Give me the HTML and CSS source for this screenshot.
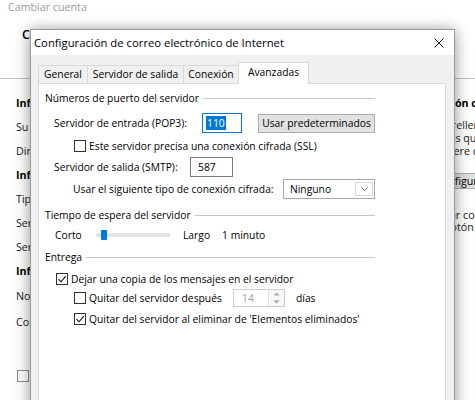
FILE: index.html
```html
<!DOCTYPE html>
<html lang="es">
    <head>
        <meta charset="UTF-8">
        <meta name="viewport" content="width=device-width, initial-scale=1.0">
        <title>Cambiar cuenta</title>
        <link rel="stylesheet" href="styles.css">
    </head>
    <body>
        <div class="screen">
            <!-- Account window underneath -->
            <div class="account">
                <div class="account-title">Cambiar cuenta</div>
                <div class="account-head">Configuración de cuenta POP e IMAP</div>
                <div class="account-body">
                    <div class="account-fields">
                        <div class="field field-head">Información sobre el usuario</div>
                        <div class="field">Su nombre:</div>
                        <div class="field">Dirección de correo electrónico:</div>
                        <div class="field field-head">Información del servidor</div>
                        <div class="field">Tipo de cuenta:</div>
                        <div class="field">Servidor de correo entrante:</div>
                        <div class="field">Servidor de correo saliente (SMTP):</div>
                        <div class="field field-head">Información de inicio de sesión</div>
                        <div class="field field-tall">Nombre de usuario:</div>
                        <div class="field field-tall">Contraseña:</div>
                        <div class="remember"><span class="remember-box"></span>Recordar contraseña</div>
                    </div>
                    <div class="account-test">
                        <div class="test-head">Información complementaria</div>
                        <p class="test-text">Para ello, rellene la información de esta pantalla.<br>Le pedimos que compruebe la cuenta<br>si se requiere conexión de red.</p>
                        <div class="test-button">Configurar cuenta...</div>
                        <p class="test-text test-note">Comprobar configuración de la cuenta.<br>Pulse el botón Siguiente para continuar.</p>
                    </div>
                </div>
            </div>

            <!-- Internet mail settings dialog -->
            <div class="dialog">
                <div class="dialog-title">
                    <span>Configuración de correo electrónico de Internet</span>
                    <svg class="dialog-close" width="10" height="10" viewBox="0 0 10 10">
                        <path d="M0.5 0.5 L9.5 9.5 M9.5 0.5 L0.5 9.5" stroke="#111" stroke-width="1" fill="none"/>
                    </svg>
                </div>
                <div class="dialog-body">
                    <div class="tabs">
                        <div class="tab tab-general">General</div>
                        <div class="tab tab-outgoing">Servidor de salida</div>
                        <div class="tab tab-connection">Conexión</div>
                        <div class="tab tab-advanced is-active">Avanzadas</div>
                    </div>
                    <div class="panel">
                        <div class="group-head">Números de puerto del servidor</div>

                        <div class="row row-pop3">
                            <span class="label label-pop3">Servidor de entrada (POP3):</span>
                            <span class="textbox textbox-focus textbox-pop3"><span class="selection">110</span></span>
                            <span class="btn">Usar predeterminados</span>
                        </div>

                        <div class="row row-ssl">
                            <span class="check"></span>
                            <span>Este servidor precisa una conexión cifrada (SSL)</span>
                        </div>

                        <div class="row row-smtp">
                            <span class="label label-smtp">Servidor de salida (SMTP):</span>
                            <span class="textbox textbox-smtp">587</span>
                        </div>

                        <div class="row row-enc">
                            <span class="label label-enc">Usar el siguiente tipo de conexión cifrada:</span>
                            <span class="select">
                                <span>Ninguno</span>
                                <span class="select-arrow">
                                    <svg width="7" height="4" viewBox="0 0 7 4"><path d="M0.5 0.5 L3.5 3.5 L6.5 0.5" stroke="#6d6d6d" fill="none"/></svg>
                                </span>
                            </span>
                        </div>

                        <div class="group-head head-timeout">Tiempo de espera del servidor</div>

                        <div class="row row-slider">
                            <span class="label label-short">Corto</span>
                            <span class="slider"><span class="slider-thumb"></span></span>
                            <span class="slider-long">Largo</span>
                            <span class="slider-value">1 minuto</span>
                        </div>

                        <div class="group-head head-delivery">Entrega</div>

                        <div class="row row-keep">
                            <span class="check is-on">
                                <svg width="10" height="10" viewBox="0 0 10 10"><path d="M1.5 5.2 L4 7.8 L8.8 2.2" stroke="#111" stroke-width="1.1" fill="none"/></svg>
                            </span>
                            <span>Dejar una copia de los mensajes en el servidor</span>
                        </div>

                        <div class="row row-after">
                            <span class="check"></span>
                            <span class="label label-after">Quitar del servidor después</span>
                            <span class="spin">
                                <span class="spin-value">14</span>
                                <span class="spin-buttons">
                                    <svg width="7" height="4" viewBox="0 0 7 4"><path d="M0.5 3.5 L3.5 0.5 L6.5 3.5 Z" fill="#a6a6a6"/></svg>
                                    <svg width="7" height="4" viewBox="0 0 7 4"><path d="M0.5 0.5 L3.5 3.5 L6.5 0.5 Z" fill="#a6a6a6"/></svg>
                                </span>
                            </span>
                            <span class="spin-unit">días</span>
                        </div>

                        <div class="row row-deleted">
                            <span class="check is-on">
                                <svg width="10" height="10" viewBox="0 0 10 10"><path d="M1.5 5.2 L4 7.8 L8.8 2.2" stroke="#111" stroke-width="1.1" fill="none"/></svg>
                            </span>
                            <span>Quitar del servidor al eliminar de 'Elementos eliminados'</span>
                        </div>
                    </div>
                </div>
            </div>
        </div>
    </body>
</html>
```

FILE: styles.css
```css
body {
    margin: 0;
    font-family: 'Open Sans', 'Noto Sans', sans-serif;
    font-size: 10.3px;
    color: #000;
    background: #fff;
}

.screen {
    position: relative;
    width: 475px;
    height: 400px;
    overflow: hidden;
    background: #fff;
}

/* Account window, mostly covered by the dialog */
.account-title {
    padding: 0 8px;
    line-height: 14px;
    font-size: 10.7px;
    color: #9a9a9a;
}

.account-head {
    margin-top: 13px;
    padding-left: 22px;
    font-size: 12.5px;
    font-weight: 600;
    line-height: 16px;
    white-space: nowrap;
}

.account-body {
    display: flex;
    margin-top: 35px;
    padding-top: 12px;
    border-top: 1px solid #c6c6c6;
}

.account-fields {
    flex: none;
    width: 403px;
    padding-left: 16px;
    box-sizing: border-box;
    font-size: 10.7px;
}

.field {
    height: 24px;
    line-height: 24px;
    white-space: nowrap;
    color: #222;
}

.field-head {
    font-weight: 700;
    color: #000;
}

.field-tall {
    height: 26px;
    line-height: 26px;
}

.remember {
    display: flex;
    align-items: center;
    gap: 6px;
    height: 12px;
    margin-top: 35px;
    padding-left: 1px;
    white-space: nowrap;
}

.remember-box {
    flex: none;
    width: 12px;
    height: 12px;
    box-sizing: border-box;
    border: 1px solid #8c8c8c;
    background: #fff;
}

.account-test {
    flex: none;
    padding-top: 6px;
    white-space: nowrap;
    font-size: 10.7px;
}

.test-head {
    font-weight: 700;
    line-height: 12px;
}

.test-text {
    margin: 10px 0 0;
    line-height: 13px;
    color: #222;
}

.test-button {
    display: inline-block;
    margin-top: 15px;
    padding: 0 31px;
    line-height: 14px;
    border: 1px solid #adadad;
    background: #e1e1e1;
}

.test-note {
    margin-top: 20px;
    line-height: 12px;
}

/* Dialog */
.dialog {
    position: absolute;
    left: 30px;
    top: 29px;
    width: 425px;
    height: 420px;
    box-sizing: border-box;
    border: 1px solid #9b9b9b;
    background: #f0f0f0;
    box-shadow: 0 0 12px rgba(0, 0, 0, 0.28), 0 4px 18px rgba(0, 0, 0, 0.18);
}

.dialog-title {
    display: flex;
    align-items: center;
    justify-content: space-between;
    height: 25px;
    padding: 0 10px 0 3px;
    background: #fff;
    font-size: 11.3px;
    white-space: nowrap;
}

.dialog-body {
    padding: 7px 8px 0 7px;
}

.tabs {
    position: relative;
    z-index: 1;
    display: flex;
    align-items: flex-end;
    height: 21px;
}

.tab {
    height: 18px;
    box-sizing: border-box;
    margin-right: -1px;
    border: 1px solid #d9d9d9;
    border-bottom: 0;
    line-height: 17px;
    text-align: center;
    background: #f0f0f0;
    white-space: nowrap;
}

.tab-general { width: 50px; }
.tab-outgoing { width: 97px; }
.tab-connection { width: 56px; }
.tab-advanced { width: 71px; }

.tab.is-active {
    height: 22px;
    margin-bottom: -1px;
    line-height: 19px;
    background: #fff;
}

.panel {
    height: 340px;
    padding: 7px 0 0 6px;
    border: 1px solid #d9d9d9;
    background: #fff;
}

.group-head {
    display: flex;
    align-items: center;
    width: 330px;
    height: 14px;
    white-space: nowrap;
}

.group-head::after {
    content: "";
    flex: 1;
    height: 1px;
    margin-left: 4px;
    background: #c8c8c8;
}

.head-timeout { margin-top: 9px; }
.head-delivery { margin-top: 8px; }

.row {
    display: flex;
    align-items: center;
    white-space: nowrap;
}

.label {
    flex: none;
}

.row-pop3 { height: 20px; margin-top: 8px; padding-left: 9px; }
.row-ssl { height: 14px; margin-top: 6px; padding-left: 29px; }
.row-smtp { height: 20px; margin-top: 4px; padding-left: 9px; }
.row-enc { height: 20px; margin-top: 2px; padding-left: 28px; }
.row-slider { height: 14px; margin-top: 6px; padding-left: 10px; }
.row-keep { height: 14px; margin-top: 8px; padding-left: 11px; }
.row-after { height: 18px; margin-top: 3px; padding-left: 29px; }
.row-deleted { height: 14px; margin-top: 5px; padding-left: 29px; }

.label-pop3 { width: 148px; }
.label-smtp { width: 136px; }
.label-enc { width: 210px; }
.label-short { width: 41px; }
.label-after { width: 144px; }

.textbox {
    display: flex;
    align-items: center;
    height: 20px;
    box-sizing: border-box;
    border: 1px solid #7a7a7a;
    background: #fff;
}

.textbox-focus {
    border-color: #0078d7;
}

.textbox-pop3 {
    width: 40px;
    padding-left: 3px;
}

.textbox-smtp {
    width: 43px;
    padding-left: 7px;
}

.selection {
    padding: 0 1px;
    line-height: 14px;
    color: #fff;
    background: #0078d7;
}

.btn {
    width: 117px;
    height: 19px;
    box-sizing: border-box;
    margin-left: 16px;
    border: 1px solid #adadad;
    background: #e1e1e1;
    line-height: 17px;
    text-align: center;
}

.check {
    display: flex;
    align-items: center;
    justify-content: center;
    flex: none;
    width: 12px;
    height: 12px;
    box-sizing: border-box;
    margin-right: 3px;
    border: 1px solid #333;
    background: #fff;
}

.select {
    display: flex;
    align-items: center;
    width: 92px;
    height: 20px;
    box-sizing: border-box;
    padding-left: 6px;
    border: 1px solid #a8a8a8;
    background: #fff;
}

.select-arrow {
    display: flex;
    align-items: center;
    justify-content: center;
    width: 18px;
    height: 14px;
    box-sizing: border-box;
    margin-left: auto;
    margin-right: 1px;
    border: 1px solid #d8d8d8;
}

.slider {
    position: relative;
    width: 74px;
    height: 4px;
    border-radius: 1px;
    background: #e3e3e3;
}

.slider-thumb {
    position: absolute;
    left: 5px;
    top: -3px;
    width: 6px;
    height: 10px;
    border-radius: 1px;
    background: #0078d7;
}

.slider-long { margin-left: 13px; }
.slider-value { margin-left: 12px; }

.spin {
    display: flex;
    width: 52px;
    height: 18px;
    box-sizing: border-box;
    border: 1px solid #cccccc;
    background: #fff;
}

.spin-value {
    flex: 1;
    padding-left: 8px;
    line-height: 16px;
    color: #a0a0a0;
}

.spin-buttons {
    display: flex;
    flex-direction: column;
    align-items: center;
    justify-content: space-around;
    width: 15px;
    border-left: 1px solid #e2e2e2;
    background: #f7f7f7;
}

.spin-unit {
    margin-left: 11px;
}
```
